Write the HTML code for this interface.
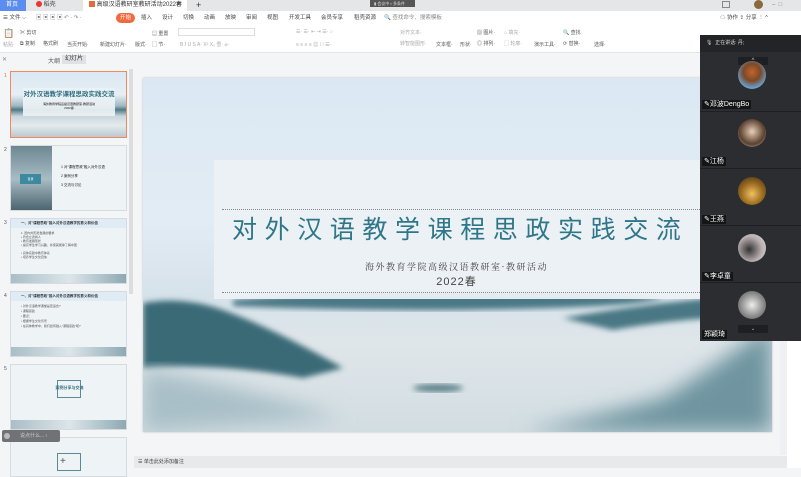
<!DOCTYPE html>
<html><head><meta charset="utf-8"><style>
*{margin:0;padding:0;box-sizing:border-box}
body{width:801px;height:468px;overflow:hidden;background:#f4f5f7;font-family:"Liberation Sans","Noto Sans CJK SC",sans-serif;font-size:6px;color:#333;position:relative}
.abs{position:absolute}
.tb{position:absolute;top:0;left:0;width:801px;height:11px;background:#e5e6e8}
.t{position:absolute;top:0;height:11px;font-size:6px;line-height:11px;padding-left:6px}
.menu{position:absolute;top:11px;left:0;width:801px;height:14px;background:#fff;font-size:5.5px;line-height:14px;color:#444}
.menu span{position:absolute}
.ribbon{position:absolute;top:25px;left:0;width:801px;height:28px;background:#fff;border-bottom:1px solid #e3e3e3;font-size:5px;color:#555}
.ribbon span{position:absolute}
.left{position:absolute;top:53px;left:0;width:134px;height:415px;background:#f4f5f7}
.th{position:absolute;left:10px;width:117px;height:66px;border:1px solid #d6dbe0;background:#eef3f6;overflow:hidden}
.num{position:absolute;left:4px;font-size:5px;color:#555}
.mist{background:linear-gradient(180deg,#dbe8f2 0%,#e6eef4 35%,#9fb9c3 52%,#4f7b86 58%,#c9d6dc 68%,#e4eaee 82%,#b9c9d0 100%)}
.panel{position:absolute;left:700px;top:35px;width:101px;height:306px;background:#2b2d31}
.p{position:absolute;left:0;width:101px;height:57px;border-top:1px solid #1d1f22}
.av{position:absolute;left:38px;width:28px;height:28px;border-radius:50%}
.nm{position:absolute;left:2px;background:#141517;color:#fff;font-size:7px;line-height:9px;padding:0 2px}
</style></head><body>
<div class="tb">
 <div class="t" style="left:0;width:26px;background:#5b8def;color:#fff">首页</div>
 <div class="t" style="left:30px;width:50px;color:#444"><span style="display:inline-block;width:6px;height:6px;border-radius:50%;background:#e33;vertical-align:-1px"></span> 稻壳</div>
 <div class="t" style="left:83px;width:104px;background:#fff;color:#333"><span style="display:inline-block;width:6px;height:6px;background:#e8693a;vertical-align:-1px"></span> 高级汉语教研室教研活动2022春 <span style="position:absolute;right:6px">✕</span></div>
 <div class="t" style="left:190px;font-size:9px">+</div>
 <div class="abs" style="left:370px;top:0;width:45px;height:7px;background:#555;color:#ddd;font-size:4px;line-height:7px;padding-left:4px">▮ 会议中 ▪ 多条件</div>
 <div class="abs" style="left:722px;top:1px;width:8px;height:7px;border:1px solid #888"></div>
 <div class="abs" style="left:754px;top:0;width:9px;height:9px;border-radius:50%;background:#8a6a3a"></div>
 <div class="abs" style="left:772px;top:2px;color:#888;font-size:6px">–&nbsp;&nbsp;□&nbsp;&nbsp;</div>
</div>
<div class="menu">
 <span style="left:3px">☰ 文件 ⌵</span>
 <span style="left:36px;color:#777">▣ ▣ ▣ ▣ ↶ · ↷ ·</span>
 <span style="left:116px;top:2px;height:10px;line-height:10px;width:19px;background:#f06a3f;color:#fff;border-radius:5px;text-align:center">开始</span>
 <span style="left:141px">插入</span><span style="left:162px">设计</span><span style="left:183px">切换</span><span style="left:204px">动画</span><span style="left:225px">放映</span><span style="left:246px">审阅</span><span style="left:267px">视图</span><span style="left:289px">开发工具</span><span style="left:321px">会员专享</span><span style="left:354px">稻壳资源</span>
 <span style="left:384px;color:#888">🔍 查找命令、搜索模板</span>
 <span style="left:720px">☁ 协作 ⇪ 分享 ⋮ ^</span>
</div>
<div class="ribbon">
 <span style="left:3px;top:3px;font-size:9px;color:#bbb">📋</span><span style="left:3px;top:16px;color:#aaa">粘贴·</span>
 <span style="left:20px;top:4px">✂ 剪切</span><span style="left:20px;top:15px">⧉ 复制</span>
 <span style="left:43px;top:15px">格式刷</span>
 <span style="left:67px;top:16px">当页开始·</span>
 <span style="left:100px;top:16px">新建幻灯片·</span>
 <span style="left:135px;top:16px">版式·</span><span style="left:152px;top:5px">▤ 重置</span><span style="left:152px;top:16px">▢ 节·</span>
 <span style="left:178px;top:3px;width:77px;height:8px;border:1px solid #ddd"></span>
 <span style="left:180px;top:16px;color:#aaa">B I U S A· X² X₂ 雪· ⌀·</span>
 <span style="left:296px;top:4px;color:#aaa">☰· ☰· ⇤ ⇥ ☰· ↕·</span>
 <span style="left:296px;top:16px;color:#aaa">≡ ≡ ≡ ≡ ▦ ⁞ ⁞ ☰·</span>
 <span style="left:400px;top:4px;color:#aaa">对齐文本·</span><span style="left:400px;top:15px;color:#aaa">转智能图形·</span>
 <span style="left:436px;top:16px">文本框·</span><span style="left:460px;top:16px">形状·</span>
 <span style="left:477px;top:4px">▨ 图片·</span><span style="left:477px;top:15px">◎ 排列·</span>
 <span style="left:504px;top:4px;color:#aaa">⌂ 填充·</span><span style="left:504px;top:15px;color:#aaa">▢ 轮廓·</span>
 <span style="left:534px;top:16px">演示工具·</span>
 <span style="left:563px;top:4px">🔍 查找</span><span style="left:563px;top:15px">⟳ 替换·</span>
 <span style="left:594px;top:16px">选择·</span>
</div>
<div class="left">
 <div class="abs" style="left:2px;top:3px;color:#888">✕</div>
 <div class="abs" style="left:48px;top:3px;color:#555">大纲</div>
 <div class="abs" style="left:62px;top:2px;width:24px;height:9px;background:#dfe1e4;text-align:center;line-height:9px">幻灯片</div>
 <div class="abs" style="left:129px;top:16px;width:4px;height:225px;background:#dcdde0"></div>
 <div class="num" style="top:20px;color:#e86a3a">1</div>
 <div class="th mist" style="top:18px;height:67px;border:1.5px solid #f08a5d"><div class="abs" style="left:12px;top:16px;width:92px;height:28px;background:rgba(236,242,245,.93);text-align:center;color:#2f6f80;font-size:6.5px;font-weight:bold;line-height:14px">对外汉语教学课程思政实践交流<div style="font-size:3px;color:#555;line-height:4px">海外教育学院高级汉语教研室·教研活动<br>2022春</div></div></div>
 <div class="num" style="top:94px">2</div>
 <div class="th" style="top:92px"><div class="abs" style="left:0;top:0;width:41px;height:66px;background:linear-gradient(180deg,#6d8792,#a8bcc4 50%,#455f69)"></div><div class="abs" style="left:9px;top:28px;width:21px;height:10px;background:#3d8aa0;color:#fff;font-size:3px;text-align:center;line-height:10px">目录</div><div class="abs" style="left:50px;top:17px;font-size:3.5px;line-height:9px;color:#222">1 对"课程思政"融入对外汉语<br>2 案例分享<br>3 交流与讨论</div></div>
 <div class="num" style="top:167px">3</div>
 <div class="th" style="top:165px"><div class="abs" style="left:0;top:0;width:117px;height:9px;background:#dfecf6;font-size:3.5px;line-height:9px;padding-left:10px;font-weight:bold">一、对"课程思政"融入对外汉语教学的意义和价值</div><div class="abs" style="left:10px;top:12px;font-size:3px;line-height:4px;color:#555">1. 国内外形势发展的要求<br>• 符合立德树人<br>• 教育发展现状<br>• 提高学生学习兴趣，并使其能够了解中国<br><br>• 具体实践中教育体系<br>• 培养学生文化自信</div><div class="abs" style="left:0;top:55px;width:117px;height:11px;background:linear-gradient(90deg,#a9bec6,#dce6ea,#8aa7b2)"></div></div>
 <div class="num" style="top:240px">4</div>
 <div class="th" style="top:238px"><div class="abs" style="left:0;top:0;width:117px;height:9px;background:#dfecf6;font-size:3.5px;line-height:9px;padding-left:10px;font-weight:bold">一、对"课程思政"融入对外汉语教学的意义和价值</div><div class="abs" style="left:10px;top:12px;font-size:3px;line-height:5px;color:#555">• 对外汉语教学课堂是否适合?<br>• 课程思政<br>• 要点：<br>• 根据学生文化背景<br>• 在具体教学中，我们如何融入"课程思政"呢?</div><div class="abs" style="left:0;top:55px;width:117px;height:11px;background:linear-gradient(90deg,#a9bec6,#dce6ea,#8aa7b2)"></div></div>
 <div class="num" style="top:313px">5</div>
 <div class="th" style="top:311px"><div class="abs" style="left:46px;top:15px;width:24px;height:18px;border:1px solid #5a8a9a"></div><div class="abs" style="left:0;top:20px;width:117px;text-align:center;font-size:4px;color:#2f6f80;font-weight:bold">案例分享与交流</div><div class="abs" style="left:0;top:55px;width:117px;height:11px;background:linear-gradient(90deg,#a9bec6,#dce6ea,#8aa7b2)"></div></div>
 <div class="th" style="top:384px;height:40px"><div class="abs" style="left:46px;top:15px;width:24px;height:18px;border:1px solid #5a8a9a"></div></div>
 <div class="abs" style="left:2px;top:377px;width:58px;height:12px;background:#707275;border-radius:2px;color:#ccc;font-size:5px;line-height:12px;padding-left:18px">说点什么... ‹</div>
 <div class="abs" style="left:4px;top:380px;width:6px;height:6px;border-radius:50%;background:#bbb"></div>
 <div class="abs" style="left:60px;top:403px;font-size:10px;color:#555">+</div>
</div>
<div class="abs" style="left:143px;top:78px;width:629px;height:354px;box-shadow:0 0 2px #bbb;overflow:hidden;background:linear-gradient(180deg,#dbe8f3 0%,#e2ecf4 40%,#d6e2ea 62%,#dfe6ea 75%,#d2dde2 100%)">
 <svg class="abs" style="left:0;top:0" width="629" height="354">
  <defs><filter id="b"><feGaussianBlur stdDeviation="3"/></filter><filter id="b2"><feGaussianBlur stdDeviation="10"/></filter></defs>
  <path d="M0 225 Q40 218 80 232 Q130 250 200 290 L160 300 Q80 285 0 290Z" fill="#3a6a77" filter="url(#b)"/>
  <path d="M90 222 Q200 212 300 214 Q420 212 520 220 Q500 230 300 232 Q180 232 90 228Z" fill="#4b7885" filter="url(#b)"/>
  <path d="M420 240 Q520 222 629 216 L629 240 Q560 236 470 252Z" fill="#4a7783" filter="url(#b)"/>
  <path d="M629 245 Q570 290 520 320 Q450 340 380 354 L629 354Z" fill="#6f95a0" filter="url(#b2)"/>
  <path d="M0 290 Q100 310 200 340 L0 354Z" fill="#a9bfc7" filter="url(#b2)"/>
  <ellipse cx="295" cy="310" rx="25" ry="4" fill="#5d808a" filter="url(#b)"/>
 </svg>
</div>
<div class="abs" style="left:214px;top:160px;width:490px;height:139px;background:rgba(236,241,244,.95)">
 <div class="abs" style="left:8px;top:49px;width:482px;border-top:1px dotted #888"></div>
 <div class="abs" style="left:18px;top:54px;width:480px;font-size:25px;letter-spacing:7.6px;color:#2f7788;font-family:'Liberation Sans','Noto Sans CJK SC',sans-serif;line-height:32px;white-space:nowrap">对外汉语教学课程思政实践交流</div>
 <div class="abs" style="left:0;top:100px;width:485px;text-align:center;font-size:9px;letter-spacing:1.5px;color:#444;font-family:'Noto Serif CJK SC',serif">海外教育学院高级汉语教研室·教研活动</div>
 <div class="abs" style="left:0;top:113px;width:485px;text-align:center;font-size:11px;letter-spacing:1px;color:#444">2022春</div>
 <div class="abs" style="left:8px;top:132px;width:482px;border-top:1px dotted #888"></div>
</div>
<div class="abs" style="left:780px;top:53px;width:7px;height:402px;background:#eef0f4"></div>
<div class="abs" style="left:787px;top:53px;width:14px;height:415px;background:#fff"></div>
<div class="abs" style="left:134px;top:456px;width:653px;height:12px;background:#e8e9eb;font-size:5px;line-height:12px;padding-left:4px;color:#444">☰ 单击此处添加备注</div>
<div class="panel">
 <div class="abs" style="left:0;top:0;width:101px;height:17px;background:#232427;color:#ddd;font-size:5px;line-height:17px;padding-left:6px">🎙 &nbsp;正在讲话: 丹;</div>
 <div class="abs" style="left:38px;top:22px;width:30px;height:8px;background:#1e1f22;color:#ccc;font-size:6px;text-align:center;line-height:8px">^</div>
 <div class="av" style="top:26px;background:radial-gradient(circle at 50% 40%,#c4642a,#7a4a2a 40%,#6aa6d8 75%)"></div>
 <div class="nm" style="top:65px">✎邓波DengBo</div>
 <div class="p" style="top:76px"></div>
 <div class="av" style="top:84px;background:radial-gradient(circle at 50% 45%,#e8d0b8,#5a4030 60%,#d8c8b0)"></div>
 <div class="nm" style="top:122px">✎江杨</div>
 <div class="p" style="top:133px"></div>
 <div class="av" style="top:142px;background:radial-gradient(circle at 50% 60%,#f0c060,#9a6a20 50%,#3a2a18)"></div>
 <div class="nm" style="top:180px">✎王燕</div>
 <div class="p" style="top:190px"></div>
 <div class="av" style="top:199px;background:radial-gradient(circle at 40% 55%,#333,#b8aeb0 55%,#ddd)"></div>
 <div class="nm" style="top:237px">✎李卓童</div>
 <div class="p" style="top:247px"></div>
 <div class="av" style="top:256px;background:radial-gradient(circle at 50% 50%,#eee,#888 60%,#555)"></div>
 <div class="abs" style="left:38px;top:290px;width:30px;height:8px;background:#1e1f22;color:#ccc;font-size:5px;text-align:center;line-height:8px">⌄</div>
 <div class="nm" style="top:295px">郑颖琦</div>
</div>
</body></html>
